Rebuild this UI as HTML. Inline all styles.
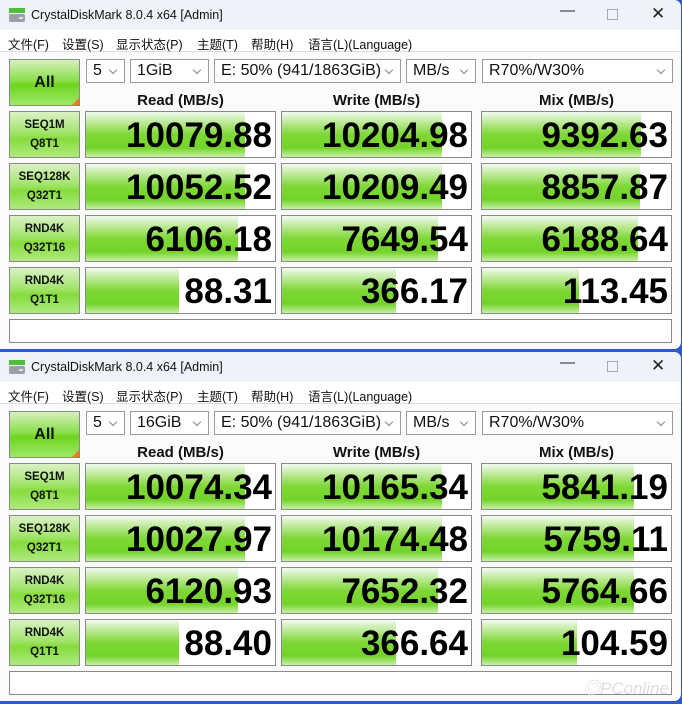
<!DOCTYPE html>
<html><head><meta charset="utf-8"><style>
*{margin:0;padding:0;box-sizing:border-box}
body{width:682px;height:704px;background:#2a5bd0;position:relative;overflow:hidden;font-family:"Liberation Sans","Noto Sans CJK SC",sans-serif}
.win{position:absolute;left:0;width:681px;height:349px;background:#fbfbfb;border-radius:0 7px 7px 0;overflow:hidden}
.tb{position:absolute;left:0;top:0;width:100%;height:30px;background:#eef2f9}
.tt{position:absolute;left:31px;top:8px;font-size:12.5px;color:#111}
.ic{position:absolute;left:9px;top:8px;width:16px;height:14px}
.ctl{position:absolute;top:6px;font-size:15px;color:#222}
.mn{position:absolute;left:0;top:30px;width:100%;height:22px;background:#fff;border-bottom:1px solid #ddd;font-size:12.5px;color:#111}
.mn span{position:absolute;top:4px}
.all{position:absolute;left:9px;top:59px;width:71px;height:47px;border:1px solid #8a8a8a;background:linear-gradient(#d6f0c0,#8be04a 45%,#6fd41e 55%,#9ee86a);font-weight:bold;font-size:16px;text-align:center;line-height:45px;color:#111}
.all:after{content:"";position:absolute;right:0;bottom:0;border-left:7px solid transparent;border-bottom:7px solid #f07a1a}
.dd{position:absolute;top:59px;height:24px;border:1px solid #9a9a9a;background:#fff;font-size:16px;color:#111;padding:2px 0 0 6px}
.dd:after{content:"";position:absolute;right:8px;top:7px;width:5px;height:5px;border-right:1px solid #888;border-bottom:1px solid #888;transform:rotate(45deg)}
.hd{position:absolute;top:92px;font-weight:bold;font-size:15px;color:#111;text-align:center;width:191px}
.lb{position:absolute;left:9px;width:71px;height:47px;border:1px solid #8a8a8a;background:linear-gradient(#d9f2c4,#a3e46e 45%,#86dc3c 60%,#b0ea80);font-weight:bold;font-size:11.5px;text-align:center;line-height:19px;padding-top:4px;color:#111}
.cell{position:absolute;width:191px;height:47px;border:1px solid #8a8a8a;background:#fff;overflow:hidden}
.cell i{position:absolute;left:0;top:0;bottom:0;background:linear-gradient(#f4faf0,#b8e890 25%,#7ed836 50%,#74d42a 80%,#c8f0a8)}
.cell b{position:absolute;right:3px;top:4px;font-size:35px;color:#000;font-weight:bold}
.bot{position:absolute;left:9px;top:319px;width:663px;height:24px;border:1px solid #8a8a8a;background:#fff}
</style></head><body>

<div class="win" style="top:0">
<div class="tb"><svg class="ic" viewBox="0 0 16 14"><rect x="0" y="0" width="16" height="5" fill="#4cbe3a"/><rect x="0" y="6" width="16" height="8" rx="2" fill="#9aa0a6"/><rect x="10" y="9" width="4" height="2" fill="#e0e0e0"/></svg><div class="tt">CrystalDiskMark 8.0.4 x64 [Admin]</div>
<div class="ctl" style="left:560px;top:2px">—</div><div style="position:absolute;left:607px;top:9px;width:11px;height:11px;border:1px solid #aaa"></div><div class="ctl" style="left:651px;top:4px;font-size:17px">✕</div></div>
<div class="mn"><span style="left:8px">文件(F)</span><span style="left:62px">设置(S)</span><span style="left:116px">显示状态(P)</span><span style="left:197px">主题(T)</span><span style="left:251px">帮助(H)</span><span style="left:308px">语言(L)(Language)</span></div>
<div class="all">All</div>
<div class="dd" style="left:86px;width:39px">5</div>
<div class="dd" style="left:130px;width:79px">1GiB</div>
<div class="dd" style="left:214px;width:187px">E: 50% (941/1863GiB)</div>
<div class="dd" style="left:406px;width:70px">MB/s</div>
<div class="dd" style="left:482px;width:191px">R70%/W30%</div>
<div class="hd" style="left:85px">Read (MB/s)</div><div class="hd" style="left:281px">Write (MB/s)</div><div class="hd" style="left:481px">Mix (MB/s)</div>
<div class="lb" style="top:111px">SEQ1M<br>Q8T1</div>
<div class="lb" style="top:163px">SEQ128K<br>Q32T1</div>
<div class="lb" style="top:215px">RND4K<br>Q32T16</div>
<div class="lb" style="top:267px">RND4K<br>Q1T1</div>
<div class="cell" style="left:85px;top:111px"><i style="width:159px"></i><b>10079.88</b></div>
<div class="cell" style="left:281px;top:111px"><i style="width:160px"></i><b>10204.98</b></div>
<div class="cell" style="left:481px;top:111px"><i style="width:159px"></i><b>9392.63</b></div>
<div class="cell" style="left:85px;top:163px"><i style="width:159px"></i><b>10052.52</b></div>
<div class="cell" style="left:281px;top:163px"><i style="width:160px"></i><b>10209.49</b></div>
<div class="cell" style="left:481px;top:163px"><i style="width:158px"></i><b>8857.87</b></div>
<div class="cell" style="left:85px;top:215px"><i style="width:152px"></i><b>6106.18</b></div>
<div class="cell" style="left:281px;top:215px"><i style="width:156px"></i><b>7649.54</b></div>
<div class="cell" style="left:481px;top:215px"><i style="width:156px"></i><b>6188.64</b></div>
<div class="cell" style="left:85px;top:267px"><i style="width:93px"></i><b>88.31</b></div>
<div class="cell" style="left:281px;top:267px"><i style="width:114px"></i><b>366.17</b></div>
<div class="cell" style="left:481px;top:267px"><i style="width:97px"></i><b>113.45</b></div>
<div class="bot"></div>
</div>

<div class="win" style="top:352px">
<div class="tb"><svg class="ic" viewBox="0 0 16 14"><rect x="0" y="0" width="16" height="5" fill="#4cbe3a"/><rect x="0" y="6" width="16" height="8" rx="2" fill="#9aa0a6"/><rect x="10" y="9" width="4" height="2" fill="#e0e0e0"/></svg><div class="tt">CrystalDiskMark 8.0.4 x64 [Admin]</div>
<div class="ctl" style="left:560px;top:2px">—</div><div style="position:absolute;left:607px;top:9px;width:11px;height:11px;border:1px solid #aaa"></div><div class="ctl" style="left:651px;top:4px;font-size:17px">✕</div></div>
<div class="mn"><span style="left:8px">文件(F)</span><span style="left:62px">设置(S)</span><span style="left:116px">显示状态(P)</span><span style="left:197px">主题(T)</span><span style="left:251px">帮助(H)</span><span style="left:308px">语言(L)(Language)</span></div>
<div class="all">All</div>
<div class="dd" style="left:86px;width:39px">5</div>
<div class="dd" style="left:130px;width:79px">16GiB</div>
<div class="dd" style="left:214px;width:187px">E: 50% (941/1863GiB)</div>
<div class="dd" style="left:406px;width:70px">MB/s</div>
<div class="dd" style="left:482px;width:191px">R70%/W30%</div>
<div class="hd" style="left:85px">Read (MB/s)</div><div class="hd" style="left:281px">Write (MB/s)</div><div class="hd" style="left:481px">Mix (MB/s)</div>
<div class="lb" style="top:111px">SEQ1M<br>Q8T1</div>
<div class="lb" style="top:163px">SEQ128K<br>Q32T1</div>
<div class="lb" style="top:215px">RND4K<br>Q32T16</div>
<div class="lb" style="top:267px">RND4K<br>Q1T1</div>
<div class="cell" style="left:85px;top:111px"><i style="width:159px"></i><b>10074.34</b></div>
<div class="cell" style="left:281px;top:111px"><i style="width:160px"></i><b>10165.34</b></div>
<div class="cell" style="left:481px;top:111px"><i style="width:152px"></i><b>5841.19</b></div>
<div class="cell" style="left:85px;top:163px"><i style="width:159px"></i><b>10027.97</b></div>
<div class="cell" style="left:281px;top:163px"><i style="width:160px"></i><b>10174.48</b></div>
<div class="cell" style="left:481px;top:163px"><i style="width:152px"></i><b>5759.11</b></div>
<div class="cell" style="left:85px;top:215px"><i style="width:152px"></i><b>6120.93</b></div>
<div class="cell" style="left:281px;top:215px"><i style="width:156px"></i><b>7652.32</b></div>
<div class="cell" style="left:481px;top:215px"><i style="width:152px"></i><b>5764.66</b></div>
<div class="cell" style="left:85px;top:267px"><i style="width:93px"></i><b>88.40</b></div>
<div class="cell" style="left:281px;top:267px"><i style="width:114px"></i><b>366.64</b></div>
<div class="cell" style="left:481px;top:267px"><i style="width:95px"></i><b>104.59</b></div>
<div class="bot"><span style="position:absolute;right:2px;top:2px;font-size:17px;color:#ddd;font-style:italic">◎PConline</span></div>
</div>
</body></html>
